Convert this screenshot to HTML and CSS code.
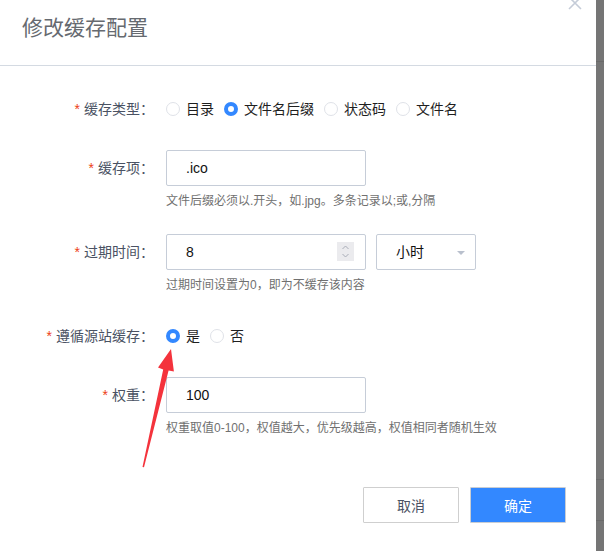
FILE: index.html
```html
<!DOCTYPE html>
<html lang="zh-CN">
<head>
<meta charset="utf-8">
<title>修改缓存配置</title>
<link rel="stylesheet" href="styles.css">
</head>
<body>
<div class="page">
  <div class="dialog">
    <div class="header">
      <div class="title">修改缓存配置</div>
      <span class="close">
        <svg width="14" height="14" viewBox="0 0 14 14"><path d="M1 1L13 13M13 1L1 13" stroke="#c5ccd8" stroke-width="1.6" fill="none"/></svg>
      </span>
    </div>
    <div class="form">
      <div class="item">
        <div class="row">
          <label class="label"><span class="req">*</span>缓存类型：</label>
          <div class="radios">
            <span class="radio"><span class="dot"></span>目录</span>
            <span class="radio"><span class="dot on"></span>文件名后缀</span>
            <span class="radio"><span class="dot"></span>状态码</span>
            <span class="radio"><span class="dot"></span>文件名</span>
          </div>
        </div>
      </div>
      <div class="item">
        <div class="row">
          <label class="label"><span class="req">*</span>缓存项：</label>
          <div class="input">.ico</div>
        </div>
        <div class="help">文件后缀必须以.开头，如.jpg。多条记录以;或,分隔</div>
      </div>
      <div class="item">
        <div class="row">
          <label class="label"><span class="req">*</span>过期时间：</label>
          <div class="input">8
            <span class="spin">
              <svg width="17" height="19" viewBox="0 0 17 19"><path d="M5.5 7L8.5 4L11.5 7M5.5 12L8.5 15L11.5 12" stroke="#a9adb8" stroke-width="1" fill="none"/></svg>
            </span>
          </div>
          <div class="select">小时<span class="caret"></span></div>
        </div>
        <div class="help">过期时间设置为0，即为不缓存该内容</div>
      </div>
      <div class="item">
        <div class="row">
          <label class="label"><span class="req">*</span>遵循源站缓存：</label>
          <div class="radios">
            <span class="radio"><span class="dot on"></span>是</span>
            <span class="radio"><span class="dot"></span>否</span>
          </div>
        </div>
      </div>
      <div class="item">
        <div class="row">
          <label class="label"><span class="req">*</span>权重：</label>
          <div class="input">100</div>
        </div>
        <div class="help">权重取值0-100，权值越大，优先级越高，权值相同者随机生效</div>
      </div>
    </div>
    <div class="footer">
      <button class="btn">取消</button>
      <button class="btn primary">确定</button>
    </div>
    <svg class="arrow" width="596" height="551" viewBox="0 0 596 551">
      <polygon points="142.5,467 163.2,369.4 158,367.6 171,349 173.9,371.5 168.6,370.6 144,467.3" fill="#f4333c"/>
    </svg>
  </div>
  <div class="shade">
    <div class="shade-line l1"></div>
    <div class="shade-line l2"></div>
    <div class="shade-line l3"></div>
  </div>
</div>
</body>
</html>
```
FILE: styles.css
```css
* { box-sizing: border-box; }
html, body { margin: 0; padding: 0; }
body {
  font-family: "Liberation Sans", "Noto Sans CJK SC", sans-serif;
  font-size: 14px;
  background: #fff;
}
.page {
  display: flex;
  width: 604px;
  height: 551px;
  overflow: hidden;
}
.dialog {
  position: relative;
  width: 596px;
  height: 551px;
  background: #fff;
}
.shade {
  position: relative;
  width: 8px;
  height: 551px;
  background: #757575;
}
.shade-line { position: absolute; left: 0; width: 8px; height: 1px; background: #6a6a6a; }
.l1 { top: 61px; }
.l2 { top: 479px; }
.l3 { top: 520px; }

.header {
  position: relative;
  height: 66px;
  border-bottom: 1px solid #d4dae2;
  padding: 13px 0 0 22px;
}
.title {
  font-size: 21px;
  line-height: 30px;
  color: #666a70;
  letter-spacing: 0;
}
.close {
  position: absolute;
  right: 14px;
  top: -4px;
  width: 14px;
  height: 14px;
}
.close svg { display: block; }

.form {
  padding-top: 25px;
}
.item {
  margin-bottom: 23px;
}
.row {
  display: flex;
  align-items: center;
  height: 36px;
}
.label {
  width: 154px;
  text-align: right;
  color: #4a5263;
  line-height: 20px;
  margin-right: 12px;
  white-space: nowrap;
}
.req {
  color: #ed4014;
  margin-right: 4px;
  font-family: "Liberation Sans", sans-serif;
}
.radios {
  display: flex;
  align-items: center;
  gap: 10px;
}
.radio {
  display: flex;
  align-items: center;
  color: #1f1f1f;
  line-height: 20px;
}
.dot {
  width: 14px;
  height: 14px;
  border: 1px solid #dfe2e8;
  border-radius: 50%;
  margin-right: 6px;
  background: #fff;
}
.dot.on {
  border: 4px solid #3388ff;
  background: #fff;
}
.input {
  position: relative;
  width: 200px;
  height: 36px;
  border: 1px solid #c6cdd8;
  border-radius: 2px;
  padding-left: 19px;
  line-height: 34px;
  color: #111;
  font-size: 14px;
}
.spin {
  position: absolute;
  right: 11px;
  top: 7px;
  width: 17px;
  height: 19px;
  background: #ebebee;
}
.spin svg { display: block; }
.select {
  position: relative;
  width: 100px;
  height: 36px;
  margin-left: 10px;
  border: 1px solid #c6cdd8;
  border-radius: 2px;
  padding-left: 19px;
  line-height: 34px;
  color: #111;
}
.caret {
  position: absolute;
  right: 10px;
  top: 16px;
  width: 0;
  height: 0;
  border-left: 4px solid transparent;
  border-right: 4px solid transparent;
  border-top: 4px solid #b9c0cd;
}
.help {
  margin-top: 5px;
  padding-left: 166px;
  font-size: 12px;
  line-height: 20px;
  color: #707070;
}
.footer {
  display: flex;
  justify-content: flex-end;
  gap: 11px;
  padding: 26px 30px 0 0;
}
.btn {
  width: 96px;
  height: 36px;
  border: 1px solid #cfcfcf;
  background: #fff;
  color: #4a5263;
  font-family: "Liberation Sans", "Noto Sans CJK SC", sans-serif;
  font-size: 14px;
  border-radius: 1px;
  padding: 0;
}
.btn.primary {
  background: #3388ff;
  color: #fff;
  border-color: #c9cdd3;
}
.arrow {
  position: absolute;
  left: 0;
  top: 0;
  pointer-events: none;
}
```
